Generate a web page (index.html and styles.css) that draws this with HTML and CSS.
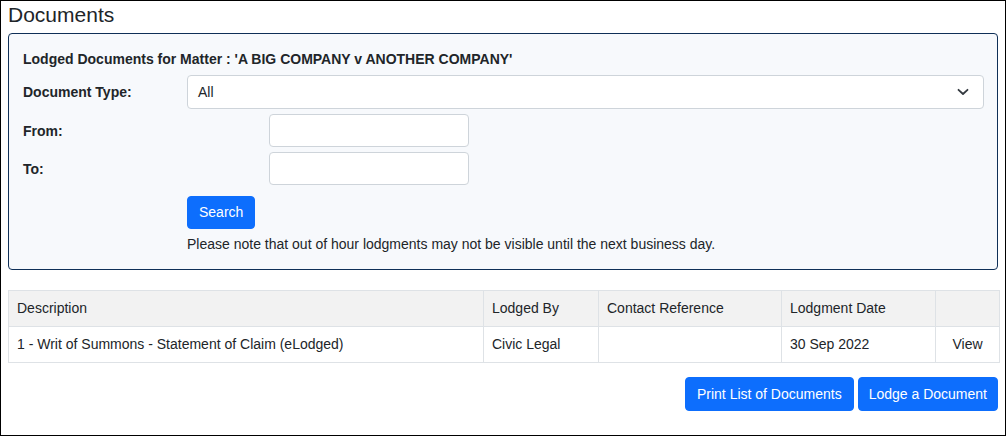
FILE: index.html
```html
<!DOCTYPE html>
<html>
<head>
<meta charset="utf-8">
<link rel="stylesheet" href="styles.css">
</head>
<body>
<div class="frame">
  <h1 class="title">Documents</h1>
  <div class="panel">
    <div class="panel-heading">Lodged Documents for Matter : 'A BIG COMPANY v ANOTHER COMPANY'</div>
    <div class="row row-select">
      <label class="label">Document Type:</label>
      <div class="select">
        <span>All</span>
        <svg class="chev" width="12" height="8" viewBox="0 0 12 8"><path d="M1.5 1.8 L6 6 L10.5 1.8" fill="none" stroke="#343a40" stroke-width="1.8" stroke-linecap="round" stroke-linejoin="round"/></svg>
      </div>
    </div>
    <div class="row row-date">
      <label class="label">From:</label>
      <div class="input"></div>
    </div>
    <div class="row row-date">
      <label class="label">To:</label>
      <div class="input"></div>
    </div>
    <div class="actions">
      <button class="btn">Search</button>
      <p class="note">Please note that out of hour lodgments may not be visible until the next business day.</p>
    </div>
  </div>
  <table class="docs">
    <thead>
      <tr>
        <th class="c1">Description</th>
        <th class="c2">Lodged By</th>
        <th class="c3">Contact Reference</th>
        <th class="c4">Lodgment Date</th>
        <th class="c5"></th>
      </tr>
    </thead>
    <tbody>
      <tr>
        <td>1 - Writ of Summons - Statement of Claim (eLodged)</td>
        <td>Civic Legal</td>
        <td></td>
        <td>30 Sep 2022</td>
        <td class="view">View</td>
      </tr>
    </tbody>
  </table>
  <div class="footer">
    <button class="btn">Print List of Documents</button>
    <button class="btn btn-lodge">Lodge a Document</button>
  </div>
</div>
</body>
</html>
```
FILE: styles.css
```css
* { box-sizing: border-box; }
html, body { margin: 0; padding: 0; }
body {
  font-family: "Liberation Sans", Arial, sans-serif;
  font-size: 14px;
  color: #212529;
  background: #fff;
}
.frame {
  width: 1006px;
  height: 436px;
  border: 1px solid #000;
  padding: 0 7px;
}
.title {
  margin: 0;
  font-size: 21px;
  font-weight: normal;
  line-height: 24px;
  padding-top: 2px;
  height: 32px;
  color: #212529;
}
.panel {
  border: 1px solid #0f2f57;
  border-radius: 4px;
  background: #f7f9fc;
  padding: 15px 13px 14px 14px;
}
.panel-heading {
  font-weight: bold;
  font-size: 14px;
  line-height: 20px;
  margin-bottom: 6px;
}
.row {
  display: flex;
  align-items: center;
}
.label {
  font-weight: bold;
  font-size: 14px;
  width: 164px;
  flex: none;
}
.row-select { height: 34px; }
.select {
  flex: 1;
  height: 34px;
  background: #fff;
  border: 1px solid #ced4da;
  border-radius: 4px;
  display: flex;
  align-items: center;
  justify-content: space-between;
  padding: 0 14px 0 10px;
  font-size: 14px;
}
.row-date { margin-top: 5px; height: 33px; }
.row-date .label { width: 246px; }
.input {
  width: 200px;
  height: 33px;
  background: #fff;
  border: 1px solid #ced4da;
  border-radius: 4px;
}
.actions {
  margin-top: 11px;
  padding-left: 164px;
}
.btn {
  font-family: "Liberation Sans", Arial, sans-serif;
  font-size: 14px;
  line-height: 16px;
  color: #fff;
  background: #0d6efd;
  border: 1px solid #0d6efd;
  border-radius: 4px;
  height: 33px;
  padding: 0 11px 1px;
  cursor: pointer;
}
.note {
  margin: 4px 0 0 0;
  line-height: 22px;
  font-size: 14px;
}
.docs {
  margin-top: 20px;
  width: 991px;
  border-collapse: collapse;
  table-layout: fixed;
}
.docs th, .docs td {
  border: 1px solid #dee2e6;
  text-align: left;
  font-weight: normal;
  height: 36px;
  padding: 0 8px 1px;
  font-size: 14px;
  vertical-align: middle;
}
.docs th { background: #f2f2f2; }
.c1 { width: 475px; }
.c2 { width: 115px; }
.c3 { width: 183px; }
.c4 { width: 154px; }
.c5 { width: 64px; }
.docs td.view { text-align: center; }
.footer {
  margin-top: 14px;
  display: flex;
  justify-content: flex-end;
  gap: 4px;
}
.footer .btn { height: 34px; }
.footer .btn-lodge { padding: 0 10px 1px; }
```
